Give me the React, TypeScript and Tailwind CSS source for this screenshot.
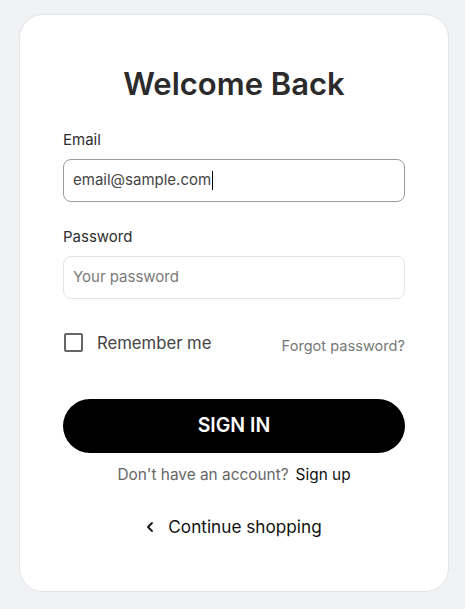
import React from "react";

export default function App() {
  return (
    <div
      className="min-h-[609px] w-full bg-[#f1f2f4] pt-[14px] pl-[19px]"
      style={{ fontFamily: "Inter, 'Liberation Sans', sans-serif" }}
    >
      <div className="flex h-[578px] w-[430px] flex-col rounded-[24px] border border-[#e4e5e7] bg-white px-[43px] pt-[49px]">
        <h1 className="text-center text-[31px] leading-[40px] font-semibold text-[#2b2b2b]">
          Welcome Back
        </h1>

        <label className="mt-[26px] text-[15px] leading-[20px] text-[#2e2e2e]">Email</label>
        <div className="mt-[9px] flex h-[43px] items-center rounded-[8px] border border-[#9b9b9b] px-[9px]">
          <span className="text-[15px] text-[#444]">email@sample.com</span>
          <span className="ml-[1px] h-[19px] w-[1px] bg-black" />
        </div>

        <label className="mt-[25px] text-[15px] leading-[20px] text-[#2e2e2e]">Password</label>
        <div className="mt-[9px] flex h-[43px] items-center rounded-[8px] border border-[#e2e4e8] px-[9px]">
          <span className="text-[15px] text-[#7a7a7a]">Your password</span>
        </div>

        <div className="mt-[30px] flex items-center justify-between">
          <div className="flex items-center gap-[14px]">
            <span className="ml-[1px] h-[19px] w-[19px] rounded-[2px] border-2 border-[#666]" />
            <span className="text-[16.7px] leading-[22px] text-[#444]">Remember me</span>
          </div>
          <span className="mt-[7px] text-[14.6px] leading-[20px] text-[#777]">Forgot password?</span>
        </div>

        <button className="mt-[43px] h-[54px] w-full rounded-full bg-black text-[19.5px] font-semibold text-white">
          SIGN IN
        </button>

        <div className="mt-[11px] flex items-center justify-center gap-[7px] text-[15.4px] leading-[22px]">
          <span className="text-[#666]">Don't have an account?</span>
          <span className="text-[#111]">Sign up</span>
        </div>

        <div className="mt-[29px] flex items-center justify-center gap-[14px] text-[17.2px] leading-[24px] text-[#111]">
          <svg width="8" height="12" viewBox="0 0 8 12" fill="none">
            <path d="M6 2L2 6l4 4" stroke="#111" strokeWidth="1.8" strokeLinecap="round" strokeLinejoin="round" />
          </svg>
          <span>Continue shopping</span>
        </div>
      </div>
    </div>
  );
}
